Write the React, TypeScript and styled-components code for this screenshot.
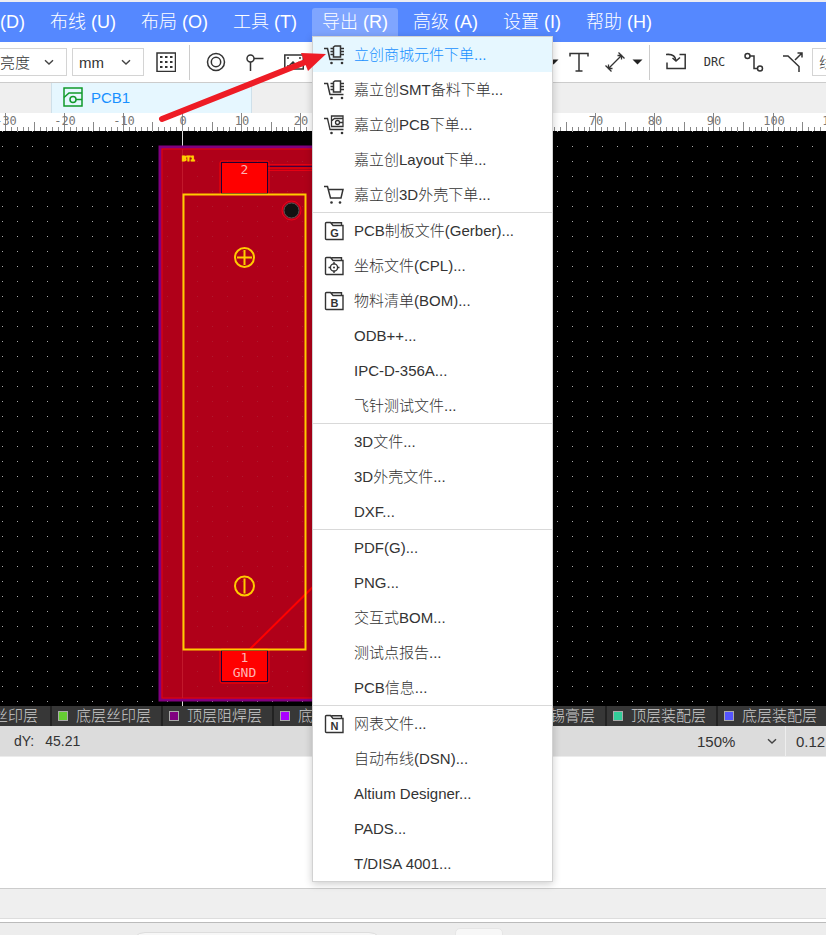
import React from "react";
import styled, { createGlobalStyle } from "styled-components";

const Global = createGlobalStyle`
  *, *::before, *::after { box-sizing: border-box; }
  html, body, #root { height: 100%; }
  body {
    margin: 0;
    overflow: hidden;
    background: #fff;
    color: #333;
    font-family: "Liberation Sans", "Noto Sans CJK SC", sans-serif;
    font-size: 15px;
    font-weight: 300;
  }
  button, select, input {
    font: inherit;
    color: inherit;
    background: none;
    border: 0;
    padding: 0;
    margin: 0;
    text-align: left;
  }
`;

const Page = styled.div`
  position: relative;
  display: flex;
  flex-direction: column;
  min-height: 100vh;
`;

const MenuBar = styled.nav`
  display: flex;
  align-items: center;
  gap: 5px;
  height: 42px;
  background: #5588ff;
  border-top: 2px solid #ededf2;
  color: #fff;
  font-size: 18px;
`;

const MenuHolder = styled.div`
  position: relative;
`;

const MenuButton = styled.button<{ $open?: boolean; $cut?: boolean }>`
  display: block;
  height: 28px;
  padding: 0 10px;
  padding-left: ${(p) => (p.$cut ? "0" : "10px")};
  border-radius: 3px 3px 0 0;
  line-height: 28px;
  white-space: nowrap;
  background: ${(p) => (p.$open ? "#7fa5ff" : "transparent")};
`;

const Dropdown = styled.ul`
  position: absolute;
  z-index: 5;
  top: 100%;
  left: 0;
  width: 241px;
  margin: 0;
  padding: 0;
  list-style: none;
  background: #fff;
  border: 1px solid #d2d2d2;
  box-shadow: 0 2px 8px rgba(0, 0, 0, 0.2);
  color: #333;
  font-size: 15px;
`;

const Entry = styled.li<{ $divided?: boolean }>`
  border-top: ${(p) => (p.$divided ? "1px solid #d9d9d9" : "0")};
`;

const EntryButton = styled.button<{ $active?: boolean }>`
  display: grid;
  grid-template-columns: 20px 1fr;
  column-gap: 10px;
  align-items: center;
  width: 100%;
  height: 35px;
  padding: 0 11px;
  line-height: 20px;
  white-space: nowrap;
  background: ${(p) => (p.$active ? "#e6f7ff" : "transparent")};
  color: ${(p) => (p.$active ? "#1890ff" : "#333")};
`;

const EntryIcon = styled.span`
  display: block;
  height: 20px;
  color: #333;
`;

const Toolbar = styled.div`
  display: flex;
  align-items: center;
  height: 41px;
  background: #fff;
  border-bottom: 1px solid #ccc;
  overflow: hidden;
`;

const SelectBox = styled.label<{ $cut?: boolean }>`
  display: grid;
  grid-template-columns: 1fr 10px;
  align-items: center;
  flex: none;
  width: ${(p) => (p.$cut ? "67px" : "72px")};
  height: 28px;
  margin-right: 5px;
  padding: 0 12px 0 ${(p) => (p.$cut ? "0" : "6px")};
  border: 1px solid #d4d4d4;
  border-left-width: ${(p) => (p.$cut ? "0" : "1px")};

  select {
    width: 100%;
    appearance: none;
    outline: 0;
  }
`;

const ToolButton = styled.button<{ $narrow?: boolean }>`
  display: grid;
  place-items: center;
  flex: none;
  width: ${(p) => (p.$narrow ? "34px" : "39px")};
  height: 34px;
  color: #333;
`;

const CaretButton = styled(ToolButton)`
  width: 11px;
`;

const DrcLabel = styled.span`
  font-family: "DejaVu Sans Mono", monospace;
  font-size: 12px;
`;

const Rule = styled.span`
  flex: none;
  width: 1px;
  height: 35px;
  margin: 0 6px;
  background: #ccc;
`;

const ToolGap = styled.span`
  flex: none;
  width: 235px;
`;

const TabStrip = styled.div`
  display: flex;
  height: 30px;
  padding-left: 51px;
  background: #efefef;
`;

const Tab = styled.button`
  display: flex;
  align-items: center;
  gap: 8px;
  width: 201px;
  padding: 0 11px 2px;
  background: #e6f7ff;
  border: solid #cfe0ea;
  border-width: 0 1px;
  color: #1890ff;
`;

const Drawing = styled.svg`
  display: block;
  flex: none;
  width: 100%;
`;

const LayerBar = styled.div`
  display: flex;
  flex: none;
  height: 20px;
  overflow: hidden;
  background: #373737;
`;

const LayerButton = styled.button`
  display: flex;
  align-items: center;
  gap: 8px;
  flex: none;
  width: 111px;
  padding-left: 6px;
  border-right: 2px solid #222;
  color: #ccc;
  line-height: 20px;
  white-space: nowrap;

  &:first-child {
    width: 52px;
    justify-content: flex-end;
    padding-right: 12px;
  }
`;

const Swatch = styled.span<{ $color: string }>`
  flex: none;
  width: 10px;
  height: 10px;
  background: ${(p) => p.$color};
  border: 1px solid #aaa;
`;

const StatusBar = styled.div`
  display: flex;
  align-items: center;
  flex: none;
  height: 31px;
  padding-left: 14px;
  background: #dcdcdc;
  border-bottom: 1px solid #ececec;
  white-space: nowrap;
  overflow: hidden;
`;

const Reading = styled.span`
  display: flex;
  gap: 11px;
  font-size: 14px;
`;

const Zoom = styled.label`
  display: grid;
  grid-template-columns: 70px 10px;
  align-items: center;
  margin-left: auto;
  height: 100%;
  padding-right: 8px;
  border-right: 1px solid #eee;

  select {
    appearance: none;
    outline: 0;
  }
`;

const GridSize = styled.span`
  width: 40px;
  padding-left: 10px;
`;

const Blank = styled.div`
  flex: none;
  height: 131px;
`;

const Panel = styled.div`
  flex: none;
  height: 31px;
  background: #efefef;
  border-top: 1px solid #ccc;
  border-bottom: 1px solid #ddd;
`;

const Footer = styled.div`
  display: flex;
  flex: 1;
  align-items: flex-start;
  gap: 71px;
  height: 16px;
  margin-top: 3px;
  padding: 5px 0 0 130px;
  background: #ededed;
  border-top: 1px solid #bbb;
  overflow: hidden;
`;

const Pill = styled.span`
  width: 254px;
  height: 30px;
  margin-top: 4px;
  border: 1px solid #ddd;
  border-radius: 15px;
  background: #f7f7f7;
`;

const Chip = styled.span`
  width: 48px;
  height: 30px;
  border: 1px solid #e6e6e6;
  border-radius: 5px;
  background: #f7f7f7;
`;

const Annotation = styled.svg`
  position: absolute;
  z-index: 10;
  top: 45px;
  left: 155px;
  pointer-events: none;
`;

function Icon({ children, w = 1.5 }: { children: React.ReactNode; w?: number }) {
  return (
    <svg width="20" height="20" viewBox="0 0 20 20" fill="none" stroke="currentColor" strokeWidth={w} aria-hidden="true">
      {children}
    </svg>
  );
}

const Chevron = () => (
  <svg width="10" height="10" viewBox="0 0 10 10" fill="none" stroke="#444" strokeWidth="1.4" aria-hidden="true">
    <path d="M1 3.2 5 7 9 3.2" />
  </svg>
);

const Caret = () => (
  <svg width="11" height="6" viewBox="0 0 11 6" aria-hidden="true">
    <path d="M0.5 0.5h10L5.500 5.500z" fill="#222" />
  </svg>
);

const CartFrame = () => (
  <>
    <path d="M0 3.500H3.500L6 14.500H19.500" />
    <circle cx="7.500" cy="18" r="1.300" fill="currentColor" stroke="none" />
    <circle cx="18" cy="18" r="1.300" fill="currentColor" stroke="none" />
  </>
);

const ChipCart = () => (
  <Icon>
    <CartFrame />
    <path d="M9.500 2 11 1h5.500v11h-7zM6.500 3.500h3M6.500 6.500h3M6.500 9.500h3M16.500 3.500h3.500M16.500 6.500h3.500M16.500 9.500h3.500" />
  </Icon>
);

const BoardCart = () => (
  <Icon w={1.3}>
    <CartFrame />
    <path d="M7.500 1h11.500v10.500h-11.500zM7.500 6 10.500 3.500H19M15.500 7.500H19" />
    <circle cx="13.500" cy="7.500" r="2" />
  </Icon>
);

const PlainCart = () => (
  <Icon>
    <path d="M0 1.500H3.500L6.500 13H17L19 4.500H4.500" />
    <circle cx="7.500" cy="17.500" r="1.300" fill="currentColor" stroke="none" />
    <circle cx="16" cy="17.500" r="1.300" fill="currentColor" stroke="none" />
  </Icon>
);

const Folder = ({ letter }: { letter?: string }) => (
  <Icon w={1.4}>
    <path d="M2.500 1.500h4l2.500 3h10v14H2.500q-1 0-1-1V2.500q0-1 1-1zM7.500 1.800H17.500V4" />
    {letter ? (
      <text x="10.500" y="16" textAnchor="middle" fontSize="11" fontWeight="700" fontFamily="Liberation Sans, sans-serif" fill="currentColor" stroke="none">
        {letter}
      </text>
    ) : (
      <>
        <circle cx="10" cy="11.500" r="3.600" />
        <circle cx="10" cy="11.500" r="1" fill="currentColor" stroke="none" />
        <path d="M10 6v2.500M10 14.500V17M4.500 11.500H7M13 11.500h2.500" />
      </>
    )}
  </Icon>
);

type Item = { label: string; icon?: React.ReactNode; divided?: boolean };

const items: Item[] = [
  { label: "立创商城元件下单...", icon: <ChipCart /> },
  { label: "嘉立创SMT备料下单...", icon: <ChipCart /> },
  { label: "嘉立创PCB下单...", icon: <BoardCart /> },
  { label: "嘉立创Layout下单..." },
  { label: "嘉立创3D外壳下单...", icon: <PlainCart /> },
  { label: "PCB制板文件(Gerber)...", icon: <Folder letter="G" />, divided: true },
  { label: "坐标文件(CPL)...", icon: <Folder /> },
  { label: "物料清单(BOM)...", icon: <Folder letter="B" /> },
  { label: "ODB++..." },
  { label: "IPC-D-356A..." },
  { label: "飞针测试文件..." },
  { label: "3D文件...", divided: true },
  { label: "3D外壳文件..." },
  { label: "DXF..." },
  { label: "PDF(G)...", divided: true },
  { label: "PNG..." },
  { label: "交互式BOM..." },
  { label: "测试点报告..." },
  { label: "PCB信息..." },
  { label: "网表文件...", icon: <Folder letter="N" />, divided: true },
  { label: "自动布线(DSN)..." },
  { label: "Altium Designer..." },
  { label: "PADS..." },
  { label: "T/DISA 4001..." },
];

const menus = ["(D)", "布线 (U)", "布局 (O)", "工具 (T)", "导出 (R)", "高级 (A)", "设置 (I)", "帮助 (H)"];

const layers: [string, string][] = [
  ["底层丝印层", "#66cc33"],
  ["顶层阻焊层", "#800080"],
  ["底层阻焊层", "#aa00ff"],
  ["顶层锡膏层", "#808080"],
  ["底层锡膏层", "#800000"],
  ["顶层装配层", "#33cc99"],
  ["底层装配层", "#5555ff"],
];

const ORIGIN_X = 182;
const PX_PER_MM = 15 / 2.54;

function Ruler() {
  const marks = Array.from({ length: 300 }, (_, i) => i - 35);
  return (
    <Drawing height="18" shapeRendering="crispEdges" aria-label="ruler">
      {marks.map((mm) => {
        const x = Math.round(ORIGIN_X + mm * PX_PER_MM);
        const length = mm % 10 === 0 ? 18 : mm % 5 === 0 ? 9 : 4;
        return <rect key={mm} x={x} y={18 - length} width="1" height={length} fill="#888" />;
      })}
      {marks
        .filter((mm) => mm % 10 === 0)
        .map((mm) => (
          <text key={mm} x={Math.round(ORIGIN_X + mm * PX_PER_MM) + 1} y="12" textAnchor="middle" fontFamily="DejaVu Sans Mono, monospace" fontSize="12" fill="#777">
            {mm}
          </text>
        ))}
    </Drawing>
  );
}

const padText = { textAnchor: "middle" as const, fontFamily: "DejaVu Sans Mono, monospace", fontSize: 13, fill: "#ffb3b3" };

function Board() {
  return (
    <Drawing height="575" aria-label="PCB1">
      <defs>
        <pattern id="dots" width="15" height="15" x="2" y="0" patternUnits="userSpaceOnUse">
          <rect width="1" height="1" fill="#aaa" />
        </pattern>
      </defs>
      <rect width="100%" height="575" fill="#000" />
      <rect width="100%" height="575" fill="url(#dots)" />
      <rect x="182" y="0" width="1" height="575" fill="#ddd" />
      <rect x="160" y="16" width="170" height="553" fill="#b00019" stroke="#800080" strokeWidth="3" />
      <rect x="162" y="18" width="166" height="549" fill="none" stroke="#e60012" />
      <rect x="164" y="20" width="162" height="545" fill="url(#dots)" opacity="0.15" />
      <rect x="182" y="18" width="1" height="549" fill="#c2182b" />
      <path d="M268 33.500H330M268 39.500H330" stroke="#e60012" />
      <path d="M268 35.500H330" stroke="#400040" />
      <path d="M268 37H330" stroke="#f00" />
      <rect x="220" y="30" width="49" height="33" rx="2" fill="none" stroke="#f00" />
      <rect x="221.500" y="31.500" width="46" height="31" fill="#f00" stroke="#220033" />
      <path d="M250 518 330 439" stroke="#f00" strokeWidth="2" />
      <rect x="220" y="518" width="49" height="34" rx="2" fill="none" stroke="#f00" />
      <rect x="221.500" y="519.500" width="46" height="31" fill="#f00" stroke="#220033" />
      <rect x="183.500" y="63.500" width="122" height="455" fill="none" stroke="#ffcc00" strokeWidth="2" />
      <g fill="none" stroke="#ffcc00" strokeWidth="2">
        <circle cx="244.500" cy="126.500" r="9.500" />
        <path d="M237 126.500h15M244.500 119v15" />
        <circle cx="244.500" cy="455" r="9.500" />
        <path d="M244.500 447.500v15" />
      </g>
      <circle cx="291.500" cy="79.500" r="9.500" fill="none" stroke="#f00018" />
      <circle cx="291.500" cy="79.500" r="7.500" fill="#111" stroke="#555" />
      <text x="182" y="30" fontFamily="DejaVu Sans Mono, monospace" fontSize="7" fontWeight="700" fill="#ffcc00" stroke="#ffcc00">
        BT1
      </text>
      <text x="244.500" y="43" {...padText}>2</text>
      <text x="244.500" y="531" {...padText}>1</text>
      <text x="244.500" y="546" {...padText}>GND</text>
    </Drawing>
  );
}

export default function App() {
  return (
    <Page>
      <Global />
      <MenuBar>
        {menus.map((label, i) => (
          <MenuHolder key={label}>
            <MenuButton $cut={i === 0} $open={i === 4}>{label}</MenuButton>
            {i === 4 && (
              <Dropdown>
                {items.map((item, n) => (
                  <Entry key={item.label} $divided={item.divided}>
                    <EntryButton $active={n === 0}>
                      <EntryIcon>{item.icon}</EntryIcon>
                      {item.label}
                    </EntryButton>
                  </Entry>
                ))}
              </Dropdown>
            )}
          </MenuHolder>
        ))}
      </MenuBar>

      <Toolbar>
        <SelectBox $cut>
          <select aria-label="亮度"><option>亮度</option></select>
          <Chevron />
        </SelectBox>
        <SelectBox>
          <select aria-label="mm"><option>mm</option></select>
          <Chevron />
        </SelectBox>
        <ToolButton $narrow aria-label="grid">
          <Icon>
            <rect x="1" y="1" width="18.500" height="18.500" />
            <path d="M4 5h13M4 10h13M4 15h13" strokeWidth="2" strokeDasharray="2.500 2.500" />
          </Icon>
        </ToolButton>
        <Rule />
        <ToolButton aria-label="via">
          <Icon><circle cx="10" cy="10" r="8.500" /><circle cx="10" cy="10" r="4.700" /></Icon>
        </ToolButton>
        <ToolButton aria-label="pad">
          <Icon><circle cx="5.500" cy="6.500" r="3.500" /><path d="M9 6.500h9.500M5.500 10v9" /></Icon>
        </ToolButton>
        <ToolButton aria-label="image">
          <Icon>
            <rect x="0.800" y="3" width="18.500" height="14" />
            <path d="M3 6h2M15 6h2M3 14h2M15 14h2M4 15l5-5 3 3 3-3" />
          </Icon>
        </ToolButton>
        <ToolGap />
        <CaretButton aria-label="more shapes"><Caret /></CaretButton>
        <ToolButton aria-label="text">
          <Icon><path d="M1 4.500V1.500h18v3M10 1.500v17.500M6.500 19h7" /></Icon>
        </ToolButton>
        <ToolButton $narrow aria-label="dimension">
          <Icon w={1.3}>
            <path d="M3.500 16.500 16.500 3.500M12.500 3.500h4v4M3.500 12.500v4h4M.500 13.500l6 6M13.500.500l6 6" />
          </Icon>
        </ToolButton>
        <CaretButton aria-label="more dimensions"><Caret /></CaretButton>
        <Rule />
        <ToolButton aria-label="import changes">
          <Icon><path d="M0 2.500q9-1 10 6M6.500 6l3.500 3 4-3.500M13.500 2.500H19.200v14H1V10.500" /></Icon>
        </ToolButton>
        <ToolButton><DrcLabel>DRC</DrcLabel></ToolButton>
        <ToolButton aria-label="route">
          <Icon><circle cx="3.500" cy="4" r="2.500" /><circle cx="16" cy="16.500" r="2.500" /><path d="M6 4h4v12.500h3.500" /></Icon>
        </ToolButton>
        <ToolButton aria-label="stretch route">
          <Icon><path d="M0 4h5l11 10.500V20M12 8l7-7M14.500 1H19v4.500" /></Icon>
        </ToolButton>
        <SelectBox>
          <select aria-label="线宽"><option>线宽</option></select>
          <Chevron />
        </SelectBox>
      </Toolbar>

      <TabStrip>
        <Tab>
          <svg width="20" height="20" viewBox="0 0 20 20" fill="none" stroke="#119a2b" strokeWidth="1.500" aria-hidden="true">
            <rect x="1" y="1" width="18" height="18" />
            <path d="M1 10.500 6 6H19M13 12.500h6" />
            <circle cx="10" cy="12.500" r="3" />
          </svg>
          PCB1
        </Tab>
      </TabStrip>

      <Ruler />
      <Board />

      <LayerBar>
        <LayerButton>顶层丝印层</LayerButton>
        {layers.map(([name, color]) => (
          <LayerButton key={name}>
            <Swatch $color={color} />
            {name}
          </LayerButton>
        ))}
      </LayerBar>

      <StatusBar>
        <Reading><span>dY:</span><span>45.21</span></Reading>
        <Zoom>
          <select aria-label="zoom"><option>150%</option></select>
          <Chevron />
        </Zoom>
        <GridSize>0.12</GridSize>
      </StatusBar>

      <Blank />
      <Panel />
      <Footer>
        <Pill />
        <Chip />
      </Footer>

      <Annotation width="180" height="85" viewBox="155 45 180 85" aria-hidden="true">
        <path d="M162 119 308 61" stroke="#ee1c25" strokeWidth="6" strokeLinecap="round" />
        <path d="M326 54 301 53 308 71Z" fill="#ee1c25" />
      </Annotation>
    </Page>
  );
}
